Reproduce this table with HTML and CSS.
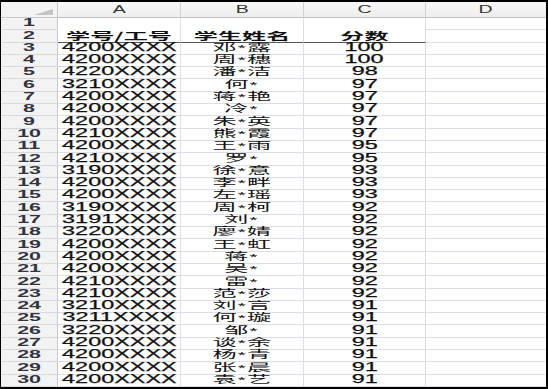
FILE: index.html
```html
<!DOCTYPE html>
<html>
<head>
<meta charset="utf-8">
<link rel="stylesheet" href="styles.css">
</head>
<body>
<div class="frame">
<div class="sheet">
  <div class="corner"><span class="tri"></span></div>
  <div class="ch"><span class="t">A</span></div>
  <div class="ch"><span class="t">B</span></div>
  <div class="ch"><span class="t">C</span></div>
  <div class="ch last"><span class="t">D</span></div>

  <div class="rh"><span class="t">1</span></div>
  <div class="c hd m"><span class="t cj">学号/工号</span></div>
  <div class="c hd m"><span class="t cj">学生姓名</span></div>
  <div class="c hd m"><span class="t cj">分数</span></div>
  <div class="c d"></div>
  <div class="rh"><span class="t">2</span></div>
  <div class="c d"></div>

  <div class="rh"><span class="t">3</span></div><div class="c"><span class="t">4200XXXX</span></div><div class="c"><span class="t cj">邓<span class="s">*</span>露</span></div><div class="c"><span class="t">100</span></div><div class="c d"></div>
  <div class="rh"><span class="t">4</span></div><div class="c"><span class="t">4200XXXX</span></div><div class="c"><span class="t cj">周<span class="s">*</span>穗</span></div><div class="c"><span class="t">100</span></div><div class="c d"></div>
  <div class="rh"><span class="t">5</span></div><div class="c"><span class="t">4220XXXX</span></div><div class="c"><span class="t cj">潘<span class="s">*</span>洁</span></div><div class="c"><span class="t">98</span></div><div class="c d"></div>
  <div class="rh"><span class="t">6</span></div><div class="c"><span class="t">3210XXXX</span></div><div class="c"><span class="t cj">何<span class="s">*</span></span></div><div class="c"><span class="t">97</span></div><div class="c d"></div>
  <div class="rh"><span class="t">7</span></div><div class="c"><span class="t">4200XXXX</span></div><div class="c"><span class="t cj">蒋<span class="s">*</span>艳</span></div><div class="c"><span class="t">97</span></div><div class="c d"></div>
  <div class="rh"><span class="t">8</span></div><div class="c"><span class="t">4200XXXX</span></div><div class="c"><span class="t cj">冷<span class="s">*</span></span></div><div class="c"><span class="t">97</span></div><div class="c d"></div>
  <div class="rh"><span class="t">9</span></div><div class="c"><span class="t">4200XXXX</span></div><div class="c"><span class="t cj">朱<span class="s">*</span>英</span></div><div class="c"><span class="t">97</span></div><div class="c d"></div>
  <div class="rh"><span class="t">10</span></div><div class="c"><span class="t">4210XXXX</span></div><div class="c"><span class="t cj">熊<span class="s">*</span>霞</span></div><div class="c"><span class="t">97</span></div><div class="c d"></div>
  <div class="rh"><span class="t">11</span></div><div class="c"><span class="t">4200XXXX</span></div><div class="c"><span class="t cj">王<span class="s">*</span>雨</span></div><div class="c"><span class="t">95</span></div><div class="c d"></div>
  <div class="rh"><span class="t">12</span></div><div class="c"><span class="t">4210XXXX</span></div><div class="c"><span class="t cj">罗<span class="s">*</span></span></div><div class="c"><span class="t">95</span></div><div class="c d"></div>
  <div class="rh"><span class="t">13</span></div><div class="c"><span class="t">3190XXXX</span></div><div class="c"><span class="t cj">徐<span class="s">*</span>意</span></div><div class="c"><span class="t">93</span></div><div class="c d"></div>
  <div class="rh"><span class="t">14</span></div><div class="c"><span class="t">4200XXXX</span></div><div class="c"><span class="t cj">李<span class="s">*</span>畔</span></div><div class="c"><span class="t">93</span></div><div class="c d"></div>
  <div class="rh"><span class="t">15</span></div><div class="c"><span class="t">4200XXXX</span></div><div class="c"><span class="t cj">左<span class="s">*</span>瑶</span></div><div class="c"><span class="t">93</span></div><div class="c d"></div>
  <div class="rh"><span class="t">16</span></div><div class="c"><span class="t">3190XXXX</span></div><div class="c"><span class="t cj">周<span class="s">*</span>柯</span></div><div class="c"><span class="t">92</span></div><div class="c d"></div>
  <div class="rh"><span class="t">17</span></div><div class="c"><span class="t">3191XXXX</span></div><div class="c"><span class="t cj">刘<span class="s">*</span></span></div><div class="c"><span class="t">92</span></div><div class="c d"></div>
  <div class="rh"><span class="t">18</span></div><div class="c"><span class="t">3220XXXX</span></div><div class="c"><span class="t cj">廖<span class="s">*</span>婧</span></div><div class="c"><span class="t">92</span></div><div class="c d"></div>
  <div class="rh"><span class="t">19</span></div><div class="c"><span class="t">4200XXXX</span></div><div class="c"><span class="t cj">王<span class="s">*</span>虹</span></div><div class="c"><span class="t">92</span></div><div class="c d"></div>
  <div class="rh"><span class="t">20</span></div><div class="c"><span class="t">4200XXXX</span></div><div class="c"><span class="t cj">蒋<span class="s">*</span></span></div><div class="c"><span class="t">92</span></div><div class="c d"></div>
  <div class="rh"><span class="t">21</span></div><div class="c"><span class="t">4200XXXX</span></div><div class="c"><span class="t cj">吴<span class="s">*</span></span></div><div class="c"><span class="t">92</span></div><div class="c d"></div>
  <div class="rh"><span class="t">22</span></div><div class="c"><span class="t">4210XXXX</span></div><div class="c"><span class="t cj">雷<span class="s">*</span></span></div><div class="c"><span class="t">92</span></div><div class="c d"></div>
  <div class="rh"><span class="t">23</span></div><div class="c"><span class="t">4210XXXX</span></div><div class="c"><span class="t cj">范<span class="s">*</span>莎</span></div><div class="c"><span class="t">92</span></div><div class="c d"></div>
  <div class="rh"><span class="t">24</span></div><div class="c"><span class="t">3210XXXX</span></div><div class="c"><span class="t cj">刘<span class="s">*</span>言</span></div><div class="c"><span class="t">91</span></div><div class="c d"></div>
  <div class="rh"><span class="t">25</span></div><div class="c"><span class="t">3211XXXX</span></div><div class="c"><span class="t cj">何<span class="s">*</span>璇</span></div><div class="c"><span class="t">91</span></div><div class="c d"></div>
  <div class="rh"><span class="t">26</span></div><div class="c"><span class="t">3220XXXX</span></div><div class="c"><span class="t cj">邹<span class="s">*</span></span></div><div class="c"><span class="t">91</span></div><div class="c d"></div>
  <div class="rh"><span class="t">27</span></div><div class="c"><span class="t">4200XXXX</span></div><div class="c"><span class="t cj">谈<span class="s">*</span>余</span></div><div class="c"><span class="t">91</span></div><div class="c d"></div>
  <div class="rh"><span class="t">28</span></div><div class="c"><span class="t">4200XXXX</span></div><div class="c"><span class="t cj">杨<span class="s">*</span>青</span></div><div class="c"><span class="t">91</span></div><div class="c d"></div>
  <div class="rh"><span class="t">29</span></div><div class="c"><span class="t">4200XXXX</span></div><div class="c"><span class="t cj">张<span class="s">*</span>晨</span></div><div class="c"><span class="t">91</span></div><div class="c d"></div>
  <div class="rh"><span class="t">30</span></div><div class="c"><span class="t">4200XXXX</span></div><div class="c"><span class="t cj">袁<span class="s">*</span>艺</span></div><div class="c"><span class="t">91</span></div><div class="c d"></div>
</div>
</div>
</body>
</html>
```
FILE: styles.css
```css
html, body {
  margin: 0;
  padding: 0;
  background: #000;
}
.frame {
  width: 548px;
  height: 389px;
  padding: 2px 2px 2px 1px;
  box-sizing: border-box;
}
.sheet {
  width: 545px;
  height: 385px;
  background: #fff;
  display: grid;
  grid-template-columns: 57px 123px 123px 122px 120px;
  grid-template-rows: 16px repeat(30, 12.3px);
  font-family: "Liberation Sans", Arial, "Noto Sans CJK SC", sans-serif;
  overflow: hidden;
}
.sheet > div {
  box-sizing: border-box;
  display: flex;
  align-items: flex-end;
  justify-content: center;
  overflow: visible;
  min-width: 0;
  min-height: 0;
}
.t {
  display: inline-block;
  transform: scaleX(1.95);
  white-space: nowrap;
}
.corner {
  background: #f3f3f3;
  border-right: 1px solid #c8c8cc;
  border-bottom: 1px solid #c8c8cc;
  padding: 0 4px 2px 0;
  justify-content: flex-end !important;
}
.tri {
  width: 0;
  height: 0;
  border-left: 19px solid transparent;
  border-bottom: 6px solid #c4c4c4;
}
.ch {
  background: linear-gradient(#f8f8f8, #eeeeee);
  border-right: 1px solid #d0d0d6;
  border-bottom: 1px solid #c0c0c4;
  font-size: 10px;
  color: #333;
  align-items: center !important;
  line-height: 12px;
}
.ch.last {
  border-right: none;
}
.rh {
  background: #f3f3f3;
  border-right: 1px solid #c8c8d0;
  border-bottom: 1px solid #d8d8e0;
  font-size: 11px;
  line-height: 11px;
  color: #343440;
  padding-bottom: 1px;
  font-weight: bold;
}
.c {
  border-right: 1px solid #dcdde8;
  border-bottom: 1px solid #dcdde8;
  font-size: 12px;
  line-height: 11px;
  color: #111;
  padding-bottom: 1px;
  -webkit-text-stroke: 0.25px #111;
}
.c.d {
  border-right: none;
}
.c.m {
  grid-row: span 2;
}
.c.hd {
  border-bottom: 1px solid #555;
  font-weight: bold;
  padding-bottom: 1px;
  -webkit-text-stroke: 0;
}
.cj {
  font-family: "Noto Sans CJK SC", sans-serif;
  font-size: 10.5px;
  line-height: 11px;
  transform: scaleX(2.3);
  -webkit-text-stroke: 0;
}
.s {
  font-family: "Liberation Sans", sans-serif;
  font-size: 9px;
  line-height: 9px;
  vertical-align: 0;
  padding: 0 0.5px;
}
```
